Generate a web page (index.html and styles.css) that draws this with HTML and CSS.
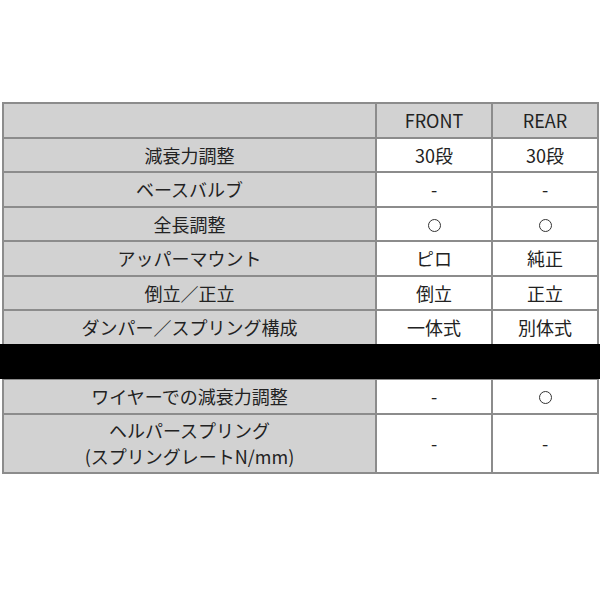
FILE: index.html
```html
<!DOCTYPE html>
<html lang="ja">
<head>
<meta charset="utf-8">
<link rel="stylesheet" href="styles.css">
</head>
<body>
<div class="page">
  <table class="spec">
    <colgroup>
      <col class="c-label">
      <col class="c-front">
      <col class="c-rear">
    </colgroup>
    <tr class="head">
      <th></th>
      <th>FRONT</th>
      <th>REAR</th>
    </tr>
    <tr><th>減衰力調整</th><td>30段</td><td>30段</td></tr>
    <tr><th>ベースバルブ</th><td>-</td><td>-</td></tr>
    <tr><th>全長調整</th><td><span class="ring" aria-label="○"></span></td><td><span class="ring" aria-label="○"></span></td></tr>
    <tr><th>アッパーマウント</th><td>ピロ</td><td>純正</td></tr>
    <tr><th>倒立／正立</th><td>倒立</td><td>正立</td></tr>
    <tr><th>ダンパー／スプリング構成</th><td>一体式</td><td>別体式</td></tr>
    <tr><th></th><td></td><td></td></tr>
    <tr><th>ワイヤーでの減衰力調整</th><td>-</td><td><span class="ring" aria-label="○"></span></td></tr>
    <tr class="tall"><th>ヘルパースプリング<br>(スプリングレートN/mm)</th><td>-</td><td>-</td></tr>
  </table>
  <div class="redact"></div>
</div>
</body>
</html>
```

FILE: styles.css
```css
html, body {
  margin: 0;
  padding: 0;
  background: #ffffff;
}

.page {
  position: relative;
  width: 600px;
  height: 600px;
  padding: 102px 0 0 2px;
  box-sizing: border-box;
}

.spec {
  width: 595px;
  table-layout: fixed;
  border-collapse: collapse;
  font-family: "Noto Sans CJK JP", "Liberation Sans", sans-serif;
  font-size: 18px;
  color: #222222;
}

.c-label { width: 373px; }
.c-front { width: 116px; }
.c-rear { width: 106px; }

.spec th,
.spec td {
  border: 2px solid #8c8c8c;
  height: 32.5px;
  padding: 0;
  text-align: center;
  vertical-align: middle;
  font-weight: normal;
  line-height: 26px;
  background: #ffffff;
}

.spec th {
  background: #d2d2d2;
}

.spec .tall th,
.spec .tall td {
  height: 57px;
}

.ring {
  display: inline-block;
  width: 11px;
  height: 11px;
  border: 1.5px solid #333333;
  border-radius: 50%;
  vertical-align: middle;
  margin-top: -3px;
}

.redact {
  position: absolute;
  left: 0;
  top: 344px;
  width: 600px;
  height: 35px;
  background: #000000;
}
```
